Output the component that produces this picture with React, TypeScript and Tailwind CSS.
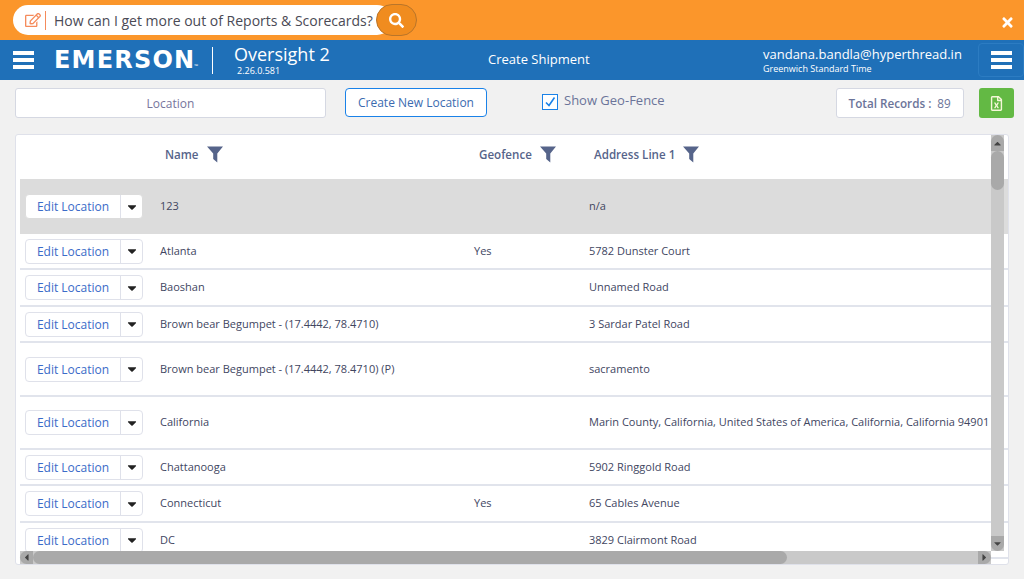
import React from "react";
import { FaCaretDown, FaCaretLeft, FaCaretRight, FaCaretUp, FaRegEdit, FaRegFileExcel, FaSearch, FaTimes } from "react-icons/fa";

const rows = [
  { name: "123", geofence: "", address: "n/a", height: "h-[55px]", selected: true },
  { name: "Atlanta", geofence: "Yes", address: "5782 Dunster Court", height: "h-[36px]" },
  { name: "Baoshan", geofence: "", address: "Unnamed Road", height: "h-[37px]" },
  { name: "Brown bear Begumpet - (17.4442, 78.4710)", geofence: "", address: "3 Sardar Patel Road", height: "h-[36px]" },
  { name: "Brown bear Begumpet - (17.4442, 78.4710) (P)", geofence: "", address: "sacramento", height: "h-[54px]" },
  { name: "California", geofence: "", address: "Marin County, California, United States of America, California, California 94901", height: "h-[53px]" },
  { name: "Chattanooga", geofence: "", address: "5902 Ringgold Road", height: "h-[36px]" },
  { name: "Connecticut", geofence: "Yes", address: "65 Cables Avenue", height: "h-[37px]" },
  { name: "DC", geofence: "", address: "3829 Clairmont Road", height: "h-[36px]" },
];

function Hamburger() {
  return (
    <div className="flex w-[21px] flex-col gap-[3px]">
      <span className="h-[4px] bg-white" />
      <span className="h-[4px] bg-white" />
      <span className="h-[4px] bg-white" />
    </div>
  );
}

function Funnel() {
  return (
    <svg width="16" height="17" viewBox="0 0 16 17" className="shrink-0">
      <path d="M0 0.5H16L10.3 7.5V16.5L6.2 13V7.5Z" fill="#56648a" />
    </svg>
  );
}

function HeaderCell({ label, className }: { label: string; className: string }) {
  return (
    <div className={`flex items-center gap-[8px] text-[11.6px] font-semibold text-[#56648a] ${className}`}>
      <span>{label}</span>
      <Funnel />
    </div>
  );
}

export default function App() {
  return (
    <div className="flex h-[579px] w-[1024px] flex-col overflow-hidden bg-[#f1f1f1] font-['Open_Sans',sans-serif]">
      {/* help bar */}
      <div className="relative flex h-[40px] shrink-0 items-start bg-[#fb962b] pl-[13px] pt-[5px]">
        <div className="flex h-[30px] w-[379px] items-center rounded-full bg-white pl-[12px]">
          <FaRegEdit className="text-[16px] text-[#f58b5c]" />
          <span className="ml-[4px] h-[19px] w-px bg-[#f58b5c]" />
          <span className="ml-[8px] whitespace-nowrap text-[14px] text-[#4a4a55]">How can I get more out of Reports &amp; Scorecards?</span>
        </div>
        <div className="-ml-[16px] mt-[-1px] flex h-[32px] w-[41px] items-center justify-center rounded-full border border-[#b9752a] bg-[#f08c1f]">
          <FaSearch className="text-[15px] text-white" />
        </div>
        <FaTimes className="absolute right-[9px] top-[15px] text-[15px] text-white" />
      </div>

      {/* app header */}
      <div className="flex h-[40px] shrink-0 items-center bg-[#1f70b8] text-white">
        <div className="ml-[13px]"><Hamburger /></div>
        <div className="ml-[20px] flex w-[145px] items-end font-['DejaVu_Sans',sans-serif] text-[24px] font-bold leading-none tracking-[1.2px]">
          EMERSON
          <span className="mb-[3px] ml-[-1px] font-['Open_Sans',sans-serif] text-[5px] font-normal tracking-normal">™</span>
        </div>
        <span className="ml-[13px] h-[27px] w-px bg-white" />
        <div className="ml-[21px] flex w-[201px] flex-col pb-[2px]">
          <span className="text-[18px] leading-[22px]">Oversight 2</span>
          <span className="ml-[3px] text-[9px] font-medium leading-[11px]">2.26.0.581</span>
        </div>
        <div className="ml-[53px] w-[224px] text-[13px]">Create Shipment</div>
        <div className="ml-[51px] flex w-[215px] flex-col pb-[1px]">
          <span className="text-[13px] leading-[18px]">vandana.bandla@hyperthread.in</span>
          <span className="text-[9px] font-medium leading-[11px]">Greenwich Standard Time</span>
        </div>
        <div className="flex h-[34px] w-[46px] items-center justify-center rounded-[4px] border border-[#2c7cc2]">
          <Hamburger />
        </div>
      </div>

      {/* toolbar */}
      <div className="flex h-[54px] shrink-0 items-start pl-[15px] pt-[8px]">
        <div className="flex h-[30px] w-[311px] items-center justify-center rounded-[3px] border border-[#d5d8e2] bg-white pt-[2px] text-[12px] text-[#77759c]">
          Location
        </div>
        <button className="ml-[19px] h-[29px] w-[142px] rounded-[4px] border border-[#1a82e8] bg-white pt-[1px] text-[12px] text-[#3b6bb0]">
          Create New Location
        </button>
        <div className="ml-[55px] mt-[3px] flex items-center">
          <div className="mt-[2px] flex h-[16px] w-[16px] items-center justify-center border border-[#1a82e8] bg-white">
            <svg width="12" height="12" viewBox="0 0 12 12" fill="none" stroke="#1a82e8" strokeWidth="1.6">
              <path d="M2 6.5L5 9.5L10.5 1.5" />
            </svg>
          </div>
          <span className="ml-[6px] text-[13px] text-[#6b7499]">Show Geo-Fence</span>
        </div>
        <div className="ml-[171px] flex h-[30px] w-[128px] items-center justify-center rounded-[3px] border border-[#d5d8e2] bg-white pt-[2px] text-[11.7px] text-[#6b7499]">
          <span className="font-semibold">Total Records :</span>
          <span className="ml-[6px]">89</span>
        </div>
        <div className="ml-[15px] flex h-[30px] w-[35px] items-center justify-center rounded-[3px] bg-[#63b944]">
          <FaRegFileExcel className="text-[15px] text-[#f4f7d8]" />
        </div>
      </div>

      {/* locations table */}
      <div className="relative ml-[15px] h-[431px] w-[994px] overflow-hidden rounded-[3px] border border-[#dfe1ea] bg-white pl-[4px]">
        <div className="flex h-[44px] items-center pb-[5px]">
          <HeaderCell label="Name" className="ml-[145px] w-[314px]" />
          <HeaderCell label="Geofence" className="w-[115px]" />
          <HeaderCell label="Address Line 1" className="" />
        </div>
        {rows.map((row) => (
          <div
            key={row.name}
            className={`flex items-center whitespace-nowrap text-[11px] text-[#41465f] ${row.height} ${row.selected ? "bg-[#dcdcdc]" : "border-b-2 border-[#e1e4ec]"}`}
          >
            <div className={`ml-[5px] flex h-[25px] w-[118px] items-center rounded-[4px] border bg-white ${row.selected ? "border-[#dcdcdc]" : "border-[#dfe1ea]"}`}>
              <span className="w-[95px] border-r border-[#dfe1ea] pt-[1px] text-center text-[12px] leading-[22px] text-[#3b6bc8]">Edit Location</span>
              <FaCaretDown className="ml-[4px] text-[14px] text-[#222]" />
            </div>
            <div className="ml-[17px] w-[314px]">{row.name}</div>
            <div className="w-[115px]">{row.geofence}</div>
            <div>{row.address}</div>
          </div>
        ))}

        {/* scrollbars */}
        <div className="absolute right-[4px] top-0 flex h-[416px] w-[13px] flex-col bg-[#c9c9c9]">
          <div className="flex h-[16px] items-center justify-center rounded-t-full bg-[#a9a9a9]">
            <FaCaretUp className="text-[11px] text-[#444]" />
          </div>
          <div className="h-[39px] rounded-full bg-[#a9a9a9]" />
          <div className="mt-auto flex h-[15px] items-center justify-center rounded-b-full bg-[#a9a9a9]">
            <FaCaretDown className="text-[11px] text-[#444]" />
          </div>
        </div>
        <div className="absolute bottom-0 left-[4px] flex h-[13px] w-[971px] bg-[#c9c9c9]">
          <div className="flex w-[13px] items-center justify-center rounded-l-full bg-[#a9a9a9]">
            <FaCaretLeft className="text-[11px] text-[#444]" />
          </div>
          <div className="h-full w-[754px] rounded-full bg-[#a9a9a9]" />
          <div className="ml-auto flex w-[13px] items-center justify-center rounded-r-full bg-[#a9a9a9]">
            <FaCaretRight className="text-[11px] text-[#444]" />
          </div>
        </div>
      </div>
    </div>
  );
}
